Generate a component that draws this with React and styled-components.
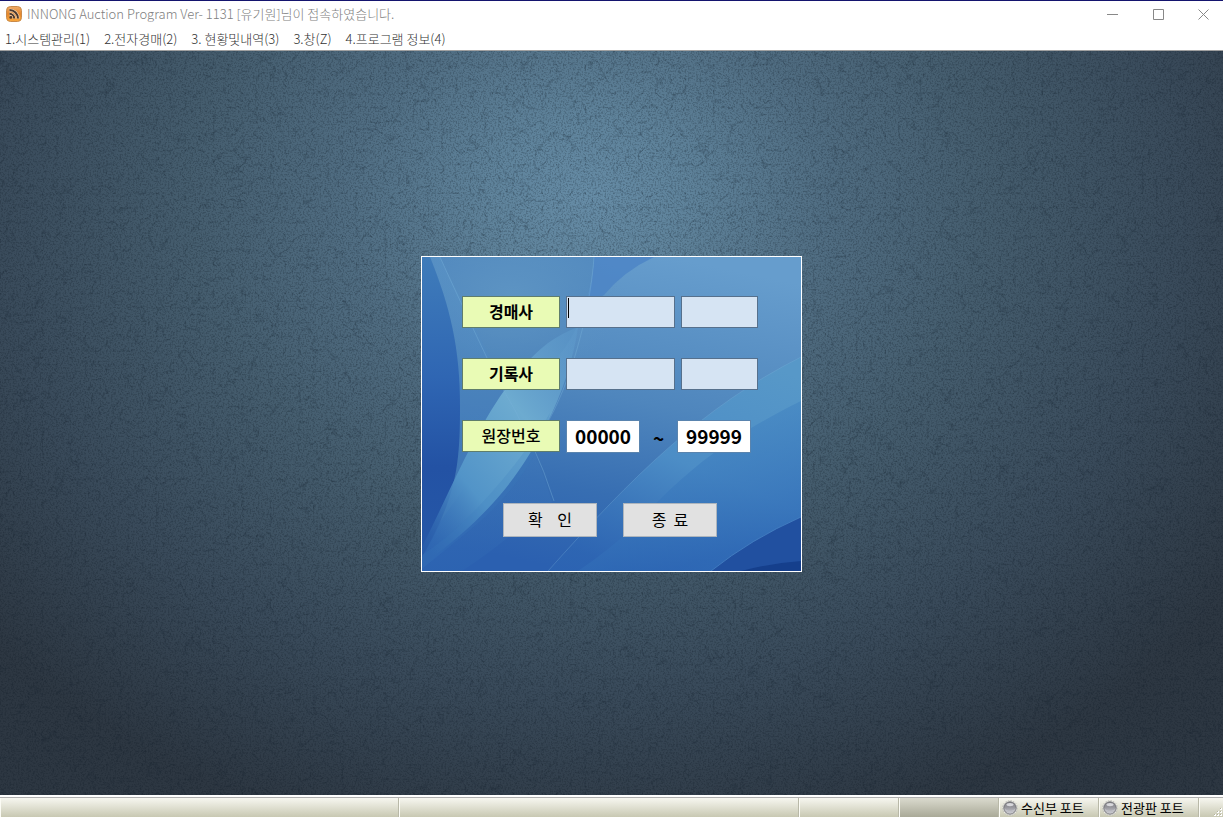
import { useState } from 'react';
import styled, { createGlobalStyle } from 'styled-components';

const MENUS = [
  '1.시스템관리(1)',
  '2.전자경매(2)',
  '3. 현황및내역(3)',
  '3.창(Z)',
  '4.프로그램 정보(4)',
];

const AppIcon = () => (
  <svg width='16' height='16' viewBox='0 0 16 16' aria-hidden='true'>
    <defs>
      <linearGradient id='appIcon' x1='0' y1='0' x2='0' y2='1'>
        <stop offset='0' stopColor='#efab68' />
        <stop offset='0.5' stopColor='#e5872c' />
        <stop offset='1' stopColor='#f9a83c' />
      </linearGradient>
    </defs>
    <rect x='0.5' y='0.5' width='15' height='15' rx='4' fill='url(#appIcon)' stroke='#c98a4a' />
    <g fill='none' stroke='#f8d9b4' strokeWidth='3.2'>
      <path d='M3.500 4a8.500 8.500 0 0 1 8.500 8.500' />
      <path d='M3.500 7.800a4.700 4.700 0 0 1 4.700 4.700' />
    </g>
    <g fill='none' stroke='#4b3a30' strokeWidth='2'>
      <path d='M3.500 4a8.500 8.500 0 0 1 8.500 8.500' />
      <path d='M3.500 7.800a4.700 4.700 0 0 1 4.700 4.700' />
    </g>
    <circle cx='4.8' cy='11.4' r='1.4' fill='#4b3a30' />
  </svg>
);

const PortIcon = ({ id }) => (
  <svg width='16' height='16' viewBox='0 0 16 16' aria-hidden='true'>
    <defs>
      <linearGradient id={id} x1='0' y1='0' x2='0' y2='1'>
        <stop offset='0' stopColor='#77777c' />
        <stop offset='0.5' stopColor='#9c9ca2' />
        <stop offset='1' stopColor='#d4d4da' />
      </linearGradient>
    </defs>
    <circle cx='8' cy='8' r='7.4' fill='#f2f2ec' stroke='#bdbdb6' strokeDasharray='1.5 1.2' />
    <circle cx='8' cy='8' r='6.2' fill={`url(#${id})`} stroke='#77777a' />
    <ellipse cx='8' cy='4.6' rx='3.6' ry='1.6' fill='#d8d8dc' />
    <path d='M2.6 9c2.4 3 8.400 3 10.800 0' fill='none' stroke='#c3c3ca' />
  </svg>
);

const Texture = () => (
  <Backdrop aria-hidden='true'>
    <filter id='damask' x='0' y='0' width='100%' height='100%' colorInterpolationFilters='sRGB'>
      <feTurbulence type='turbulence' baseFrequency='0.07' numOctaves='3' seed='8' />
      <feColorMatrix values='0 0 0 0 0.07  0 0 0 0 0.12  0 0 0 0 0.17  -6 0 0 0 1' />
    </filter>
    <filter id='grain' x='0' y='0' width='100%' height='100%' colorInterpolationFilters='sRGB'>
      <feTurbulence type='fractalNoise' baseFrequency='0.6' numOctaves='2' seed='3' />
      <feColorMatrix values='0 0 0 0 0.04  0 0 0 0 0.08  0 0 0 0 0.12  4 0 0 0 -1.8' />
    </filter>
    <rect width='100%' height='100%' filter='url(#damask)' opacity='0.26' />
    <rect width='100%' height='100%' filter='url(#grain)' opacity='0.2' />
  </Backdrop>
);

const DialogArt = () => (
  <Backdrop viewBox='0 0 379 314' preserveAspectRatio='none' aria-hidden='true'>
    <defs>
      <linearGradient id='base' x1='0.65' y1='0' x2='0.4' y2='1'>
        <stop offset='0' stopColor='#669dcd' />
        <stop offset='0.45' stopColor='#4f86bd' />
        <stop offset='0.75' stopColor='#376eb2' />
        <stop offset='1' stopColor='#2b60b0' />
      </linearGradient>
      <linearGradient id='leftShade' x1='0' y1='0' x2='0' y2='1'>
        <stop offset='0' stopColor='#3f7cba' />
        <stop offset='0.4' stopColor='#2f66b3' />
        <stop offset='0.7' stopColor='#2352a4' />
        <stop offset='1' stopColor='#2658a8' />
      </linearGradient>
      <linearGradient id='veil' x1='0' y1='0' x2='0' y2='1'>
        <stop offset='0' stopColor='#5d98ca' />
        <stop offset='1' stopColor='#2f68b3' />
      </linearGradient>
      <linearGradient id='beam' x1='0.9' y1='0' x2='0.1' y2='1'>
        <stop offset='0' stopColor='#5f9ccd' stopOpacity='0.5' />
        <stop offset='0.35' stopColor='#6dabd0' />
        <stop offset='0.7' stopColor='#5294c8' />
        <stop offset='1' stopColor='#2d66b0' stopOpacity='0.3' />
      </linearGradient>
      <linearGradient id='wedge' x1='0.8' y1='0' x2='0.3' y2='1'>
        <stop offset='0' stopColor='#5798c8' />
        <stop offset='0.5' stopColor='#4c8dc6' />
        <stop offset='1' stopColor='#2d66b4' stopOpacity='0.6' />
      </linearGradient>
      <linearGradient id='wedgeInner' x1='0' y1='0' x2='0.4' y2='1'>
        <stop offset='0' stopColor='#4f95c9' stopOpacity='0.8' />
        <stop offset='1' stopColor='#2c66b4' />
      </linearGradient>
      <radialGradient id='glow'>
        <stop offset='0' stopColor='#5d94c3' />
        <stop offset='1' stopColor='#5d94c3' stopOpacity='0' />
      </radialGradient>
    </defs>
    <rect width='379' height='314' fill='url(#base)' />
    <path d='M0 0h172q-4 60-36 100L0 290z' fill='#4a80b8' opacity='0.6' />
    <ellipse cx='90' cy='40' rx='110' ry='80' fill='url(#glow)' />
    <path d='M172 0h60q-30 14-50 38l-18 10q7-24 8-48z' fill='#4b83c5' opacity='0.8' />
    <path d='M8 0h10c40 84 90 170 112 245q-60 50-90 69H0v-14c36-60 38-90 38-150S28 50 8 0z' fill='url(#veil)' opacity='0.4' />
    <path d='M0 0h8c20 50 30 90 30 150s-4 90-38 150z' fill='url(#leftShade)' />
    <path d='M0 290C40 210 70 130 126 86q14-10 30-16c-4 30-16 68-32 98-28 54-60 94-124 140z' fill='url(#beam)' />
    <path d='M0 298C44 270 96 210 128 156q-14 60-74 112L0 312z' fill='#3d7bbd' opacity='0.2' />
    <path d='M172 0c-4 60-26 132-48 168' fill='none' stroke='#79b2da' strokeOpacity='0.4' />
    <path d='M18 0c18 40 38 82 56 120q40 66 58 124' fill='none' stroke='#79b2da' strokeOpacity='0.4' />
    <path d='M379 100C280 150 210 220 126 314H290L379 260z' fill='url(#wedge)' />
    <path d='M379 144C310 178 262 214 216 266q-30 28-60 48H290L379 260z' fill='url(#wedgeInner)' opacity='0.7' />
    <path d='M379 100C280 150 210 220 126 314' fill='none' stroke='#79b2da' strokeOpacity='0.3' />
    <path d='M379 260q-50 22-90 54h90z' fill='#2150a0' />
    <path d='M379 304q-30 2-60 10h60z' fill='#153f8c' />
    <path d='M379 260q-50 22-90 54' fill='none' stroke='#4c88c8' strokeOpacity='0.7' />
  </Backdrop>
);

const App = () => {
  const [range, setRange] = useState({ from: '00000', to: '99999' });

  return (
    <Window>
      <GlobalStyle />
      <TitleBar>
        <AppIcon />
        <Title>INNONG Auction Program Ver- 1131 [유기원]님이 접속하였습니다.</Title>
        <Caption type='button' aria-label='최소화'>
          <svg width='11' height='11' viewBox='0 0 11 11'>
            <path d='M0 5.5h11' />
          </svg>
        </Caption>
        <Caption type='button' aria-label='최대화'>
          <svg width='11' height='11' viewBox='0 0 11 11'>
            <path d='M0.5 0.5h10v10h-10z' />
          </svg>
        </Caption>
        <Caption type='button' aria-label='닫기'>
          <svg width='11' height='11' viewBox='0 0 11 11'>
            <path d='M0.5 0.5l10 10M10.500 0.5l-10 10' />
          </svg>
        </Caption>
      </TitleBar>

      <MenuBar>
        {MENUS.map((menu) => (
          <MenuItem key={menu} type='button'>
            {menu}
          </MenuItem>
        ))}
      </MenuBar>

      <Workspace>
        <Texture />
        <Dialog onSubmit={(e) => e.preventDefault()}>
          <DialogArt />
          <Row>
            <FieldLabel htmlFor='auctioneer'>경매사</FieldLabel>
            <FieldBox>
              <Field id='auctioneer' type='text' $width={109} />
              <TextCursor />
            </FieldBox>
            <Field type='text' aria-label='경매사 이름' $width={77} />
          </Row>
          <Row>
            <FieldLabel htmlFor='recorder'>기록사</FieldLabel>
            <Field id='recorder' type='text' $width={109} />
            <Field type='text' aria-label='기록사 이름' $width={77} />
          </Row>
          <Row>
            <FieldLabel htmlFor='ledgerFrom' $medium>
              원장번호
            </FieldLabel>
            <NumberField
              id='ledgerFrom'
              type='text'
              value={range.from}
              onChange={(e) => setRange({ ...range, from: e.target.value })}
            />
            <Tilde>~</Tilde>
            <NumberField
              type='text'
              aria-label='원장번호 끝'
              value={range.to}
              onChange={(e) => setRange({ ...range, to: e.target.value })}
            />
          </Row>
          <Actions>
            <Button type='submit'>{'확    인'}</Button>
            <Button type='button'>{'종  료'}</Button>
          </Actions>
        </Dialog>
      </Workspace>

      <StatusBar>
        <Panel />
        <Panel />
        <Panel />
        <Panel $dark />
        <Panel>
          <PortIcon id='portIn' />
          수신부 포트
        </Panel>
        <Panel>
          <PortIcon id='portBoard' />
          전광판 포트
        </Panel>
        <Grip>
          <svg width='10' height='10' viewBox='0 0 10 10' aria-hidden='true'>
            <path d='M7 1h2v2H7zM4 4h2v2H4zM7 4h2v2H7zM1 7h2v2H1zM4 7h2v2H4zM7 7h2v2H7z' fill='#fff' />
            <path d='M7 1h1v1H7zM4 4h1v1H4zM7 4h1v1H7zM1 7h1v1H1zM4 7h1v1H4zM7 7h1v1H7z' fill='#b4b49c' />
          </svg>
        </Grip>
      </StatusBar>
    </Window>
  );
};

const GlobalStyle = createGlobalStyle`
  * {
    box-sizing: border-box;
  }

  body {
    margin: 0;
    font-family: 'Noto Sans CJK KR', sans-serif;
  }

  button,
  input {
    font-family: inherit;
  }
`;

const Window = styled.div`
  display: flex;
  flex-direction: column;
  min-height: 100vh;
  background: #fff;
  border-top: 1px solid #14146e;
`;

const TitleBar = styled.header`
  display: flex;
  align-items: center;
  height: 26px;
  padding-left: 6px;
`;

const Title = styled.h1`
  flex: 1;
  margin: 0 0 0 5px;
  color: #808080;
  font-size: 13px;
  font-weight: 300;
  line-height: 20px;
`;

const Caption = styled.button`
  display: flex;
  align-items: center;
  justify-content: center;
  width: 46px;
  height: 26px;
  padding: 0;
  border: 0;
  background: none;

  &:last-child {
    width: 42px;
    padding-left: 2px;
  }

  svg {
    fill: none;
    stroke: #888;
  }
`;

const MenuBar = styled.nav`
  display: flex;
  gap: 14px;
  height: 24px;
  padding-left: 5px;
  border-bottom: 1px solid #a0a0a0;
`;

const MenuItem = styled.button`
  padding: 0;
  border: 0;
  background: none;
  color: #333;
  font-size: 13px;
  font-weight: 300;
  line-height: 24px;
`;

const Workspace = styled.main`
  position: relative;
  display: flex;
  flex: 1;
  align-items: center;
  justify-content: center;
  padding-bottom: 18px;
  background: radial-gradient(
    ellipse 800px 660px at 48% 20%,
    #668ca6 0%,
    #5f839b 12%,
    #506d82 30%,
    #455d6e 50%,
    #394a5a 75%,
    #2d3742 100%
  );
`;

const Backdrop = styled.svg`
  position: absolute;
  inset: 0;
  width: 100%;
  height: 100%;
`;

const Dialog = styled.form`
  position: relative;
  display: flex;
  flex-direction: column;
  gap: 30px;
  width: 381px;
  padding: 39px 40px 34px;
  border: 1px solid #fff;
`;

const Row = styled.div`
  position: relative;
  display: flex;
  gap: 6px;
  height: 32px;
`;

const FieldLabel = styled.label`
  width: 98px;
  border: 1px solid #5f7d6c;
  background: #e9fbb5;
  color: #000;
  font-size: 16px;
  font-weight: ${({ $medium }) => ($medium ? 500 : 700)};
  line-height: 28px;
  text-align: center;
`;

const Field = styled.input`
  width: ${({ $width }) => $width}px;
  height: 32px;
  padding: 0 3px;
  border: 1px solid #56708c;
  border-radius: 0;
  outline: none;
  background: #d6e4f3;
  font-size: 16px;
`;

const FieldBox = styled.div`
  position: relative;
`;

const TextCursor = styled.span`
  position: absolute;
  top: 2px;
  left: 2px;
  width: 1px;
  height: 20px;
  background: #000;
`;

const NumberField = styled.input`
  width: 74px;
  height: 33px;
  padding: 0 0 2px;
  border: 1px solid #5a84ae;
  border-radius: 0;
  outline: none;
  background: #fff;
  color: #000;
  font-size: 19px;
  font-weight: 700;
  text-align: center;
`;

const Tilde = styled.span`
  width: 25px;
  font-size: 19px;
  font-weight: 700;
  line-height: 36px;
  text-align: center;
`;

const Actions = styled.div`
  position: relative;
  display: flex;
  gap: 26px;
  padding: 21px 0 0 41px;
`;

const Button = styled.button`
  width: 94px;
  height: 34px;
  padding: 0 0 2px;
  border: 1px solid #adb5bd;
  background: #e1e1e1;
  color: #000;
  font-size: 16px;
  white-space: pre;
`;

const StatusBar = styled.footer`
  display: grid;
  grid-template-columns: 399px 1fr 100px 100px 100px 100px 24px;
  height: 22px;
  border-top: 2px solid #fff;
  box-shadow: inset 0 1px #b0b0b0;
`;

const Panel = styled.div`
  display: flex;
  gap: 3px;
  align-items: center;
  margin-top: 1px;
  padding-left: 3px;
  border-right: 1px solid #b9b9a8;
  box-shadow: inset 1px 0 #fbfbf4;
  background: ${({ $dark }) =>
    $dark
      ? 'linear-gradient(#dadace, #a9a997)'
      : 'linear-gradient(#f7f7f0, #c8c8b2)'};
  color: #000;
  font-size: 13px;
  line-height: 16px;
  white-space: nowrap;
`;

const Grip = styled(Panel)`
  align-items: flex-end;
  justify-content: flex-end;
  border-right: 0;
`;

export default App;
